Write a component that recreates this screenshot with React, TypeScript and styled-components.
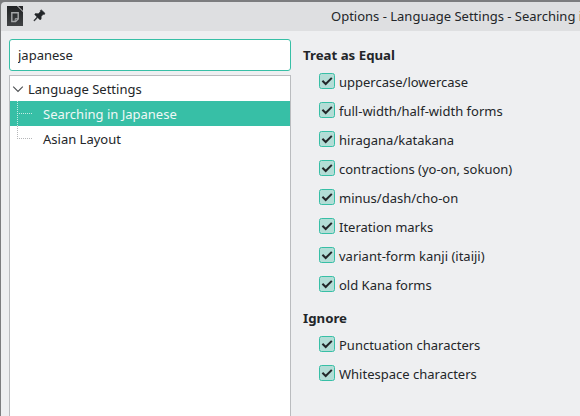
import React from 'react';
import styled, { createGlobalStyle } from 'styled-components';

const GlobalStyle = createGlobalStyle`
  * { box-sizing: border-box; }
  html, body { margin: 0; padding: 0; overflow: hidden; background: #737476; }
  body {
    font-family: 'Noto Sans', sans-serif;
    font-size: 13px;
    line-height: 18px;
    color: #232629;
  }
`;

const Window = styled.div`
  display: flex;
  flex-direction: column;
  width: 580px;
  height: 416px;
  padding: 2px 0 0 1px;
  background: #7c7d7f;
  overflow: hidden;
`;

const TitleBar = styled.header`
  display: flex;
  align-items: center;
  flex: none;
  height: 29px;
  padding-bottom: 1px;
  background: #dedfe1;
  border-top-left-radius: 4px;
  overflow: hidden;
`;

const TitleIcons = styled.div`
  display: flex;
  align-items: center;
  flex: none;
  gap: 9px;
  width: 330px;
  padding-left: 6px;
  svg { display: block; }
`;

const Title = styled.div`
  white-space: nowrap;
  line-height: 20px;
`;

const Body = styled.main`
  display: flex;
  flex: 1;
  min-height: 0;
  padding: 8px 0 0 8px;
  background: #eeeff1;
`;

const Sidebar = styled.aside`
  display: flex;
  flex-direction: column;
  gap: 4px;
  width: 282px;
`;

const SearchField = styled.input`
  flex: none;
  width: 100%;
  height: 32px;
  padding: 0 8px;
  border: 1px solid #37bfa6;
  border-radius: 3px;
  outline: none;
  background: #fff;
  color: #232629;
  font: inherit;
`;

const Tree = styled.div`
  flex: 1;
  border: 1px solid #babcbf;
  border-bottom: 0;
  background: #fff;
`;

const TreeRow = styled.div<{ $selected?: boolean }>`
  display: flex;
  align-items: center;
  height: 25px;
  background: ${(p) => (p.$selected ? '#37bfa6' : 'transparent')};
  color: ${(p) => (p.$selected ? '#eff8f6' : '#232629')};
  svg { display: block; flex: none; }
`;

const TreeLabel = styled.span`
  padding-top: 1px;
  white-space: nowrap;
`;

const Panel = styled.section`
  display: flex;
  flex-direction: column;
  padding: 7px 0 0 12px;
`;

const Heading = styled.h2<{ $spaced?: boolean }>`
  margin: ${(p) => (p.$spaced ? '9px' : '0')} 0 0;
  font-size: 13.25px;
  font-weight: 700;
  line-height: 18px;
  height: 22px;
`;

const Option = styled.label`
  display: flex;
  align-items: center;
  gap: 4px;
  height: 29px;
  padding: 0 0 3px 16px;
  white-space: nowrap;
`;

const OptionText = styled.span`
  padding-top: 2px;
`;

const CheckBox = styled.span`
  display: flex;
  flex: none;
  width: 16px;
  height: 16px;
  border: 1px solid #37bfa6;
  border-radius: 2.5px;
  background: #b3ddd6;
`;

function DocumentIcon() {
  return (
    <svg width="16" height="20" viewBox="0 0 16 20">
      <defs>
        <linearGradient id="doc" x1="0" y1="0" x2="0" y2="1">
          <stop offset="0" stopColor="#202224" />
          <stop offset="1" stopColor="#414345" />
        </linearGradient>
      </defs>
      <path d="M0 0H10L16 6V20H0Z" fill="url(#doc)" />
      <path d="M11 0H16V5Z" fill="#28292b" />
      <path d="M4.8 6.7H11.2V13L8.6 15.5H4.8Z" fill="none" stroke="#a5a7a9" strokeWidth="1.4" />
      <path d="M8.2 15.5V12.7H11.2" fill="none" stroke="#a5a7a9" />
    </svg>
  );
}

function PinIcon() {
  return (
    <svg width="14" height="14" viewBox="0 0 14 14">
      <path
        d="M8.3 1.5L9.4 0.9L12.9 4.2L12.4 5.4L11.2 5.3L9.2 7.4L9.1 10.2L8 10.7L5.7 8.6L2.4 12L1.8 11.5L5 7.9L2.8 5.6L3.3 4.6L6.3 4.8L8.4 2.7Z"
        fill="#232629"
        stroke="#232629"
        strokeWidth=".6"
      />
    </svg>
  );
}

function Expander() {
  return (
    <svg width="18" height="25" viewBox="0 0 18 25">
      <path d="M3.2 10.7L8 15.5L12.8 10.7" fill="none" stroke="#4b4e51" strokeWidth="1.1" />
    </svg>
  );
}

function Branch({ selected, last }: { selected?: boolean; last?: boolean }) {
  return (
    <svg width="33" height="25" viewBox="0 0 33 25" shapeRendering="crispEdges">
      <path
        d={last ? 'M7.5 0V13M7 12.5H22' : 'M7.5 0V25M7 12.5H22'}
        fill="none"
        stroke={selected ? '#c4eae3' : '#b5b6b8'}
        strokeDasharray="1 1"
      />
    </svg>
  );
}

function Check({ label }: { label: string }) {
  return (
    <Option>
      <CheckBox role="checkbox" aria-checked="true">
        <svg width="14" height="14" viewBox="0 0 14 14">
          <path d="M2.4 6.7L5.7 10L11.8 3.9" fill="none" stroke="#232629" strokeWidth="2" />
        </svg>
      </CheckBox>
      <OptionText>{label}</OptionText>
    </Option>
  );
}

const EQUAL = [
  'uppercase/lowercase',
  'full-width/half-width forms',
  'hiragana/katakana',
  'contractions (yo-on, sokuon)',
  'minus/dash/cho-on',
  'Iteration marks',
  'variant-form kanji (itaiji)',
  'old Kana forms',
];

const IGNORE = ['Punctuation characters', 'Whitespace characters'];

export default function App() {
  return (
    <>
      <GlobalStyle />
      <Window>
        <TitleBar>
          <TitleIcons>
            <DocumentIcon />
            <PinIcon />
          </TitleIcons>
          <Title>Options - Language Settings - Searching in Japanese</Title>
        </TitleBar>
        <Body>
          <Sidebar>
            <SearchField defaultValue="japanese" />
            <Tree>
              <TreeRow>
                <Expander />
                <TreeLabel>Language Settings</TreeLabel>
              </TreeRow>
              <TreeRow $selected>
                <Branch selected />
                <TreeLabel>Searching in Japanese</TreeLabel>
              </TreeRow>
              <TreeRow>
                <Branch last />
                <TreeLabel>Asian Layout</TreeLabel>
              </TreeRow>
            </Tree>
          </Sidebar>
          <Panel>
            <Heading>Treat as Equal</Heading>
            {EQUAL.map((label) => (
              <Check key={label} label={label} />
            ))}
            <Heading $spaced>Ignore</Heading>
            {IGNORE.map((label) => (
              <Check key={label} label={label} />
            ))}
          </Panel>
        </Body>
      </Window>
    </>
  );
}
